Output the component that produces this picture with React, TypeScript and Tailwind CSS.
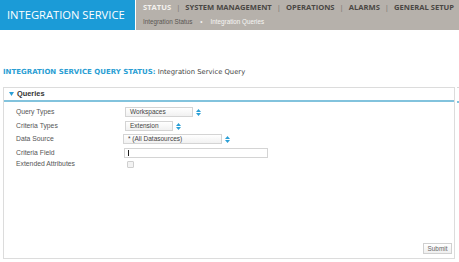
import React from "react";

const navFont = { fontFamily: '"Open Sans", "DejaVu Sans", sans-serif' };
const bodyFont = { fontFamily: '"Liberation Sans", Arial, sans-serif' };

function SpinArrows() {
  return (
    <svg width="5" height="7" viewBox="0 0 5 7" className="ml-[3px] shrink-0">
      <path d="M2.5 0 L5 3 L0 3 Z" fill="#2a9fd6" />
      <path d="M0 4 L5 4 L2.5 7 Z" fill="#2a9fd6" />
    </svg>
  );
}

function SelectBox({ width, value }: { width: string; value: string }) {
  return (
    <div className="flex items-center">
      <div
        className={`${width} h-[10px] border border-[#d4d4d4] bg-gradient-to-b from-white to-[#f1f1f1] text-[6.5px] leading-[8px] text-[#444] pl-[4px] whitespace-nowrap`}
      >
        {value}
      </div>
      <SpinArrows />
    </div>
  );
}

function FormRow({
  label,
  top,
  children,
}: {
  label: string;
  top: string;
  children: React.ReactNode;
}) {
  return (
    <div className={`flex items-center ${top}`}>
      <div className="w-[120px] shrink-0 pl-[12px] text-[6.8px] leading-[8px] text-[#555] whitespace-nowrap">{label}</div>
      {children}
    </div>
  );
}

function Sep() {
  return <span className="mx-[5px] font-normal text-[#77726d]">|</span>;
}

export default function App() {
  return (
    <div className="w-[459px] h-[262px] overflow-hidden bg-white" style={bodyFont}>
      {/* Top bar */}
      <div className="flex h-[30px]">
        <div
          className="w-[135px] shrink-0 bg-[#1b9bd7] flex items-center pl-[7px] pt-[1px] text-white text-[11.2px] whitespace-nowrap"
          style={navFont}
        >
          INTEGRATION SERVICE
        </div>
        <div className="ml-[1px] flex-1 bg-[#b6b1ab] pl-[7px] pt-[2px] whitespace-nowrap overflow-hidden" style={navFont}>
          <div className="flex items-center text-[7.6px] font-bold leading-[11px] text-[#4a4744]">
            <span className="text-[#f4f2ef]">STATUS</span>
            <Sep />
            <span>SYSTEM MANAGEMENT</span>
            <Sep />
            <span>OPERATIONS</span>
            <Sep />
            <span>ALARMS</span>
            <Sep />
            <span>GENERAL SETUP</span>
          </div>
          <div className="flex items-center text-[6.3px] leading-[10px] mt-[4px]" style={bodyFont}>
            <span className="text-[#5a5753]">Integration Status</span>
            <span className="mx-[8px] text-[#f4f2ef]">•</span>
            <span className="text-[#f7f6f4]">Integration Queries</span>
          </div>
        </div>
      </div>

      {/* Page title */}
      <div
        className="mt-[38px] pl-[3px] text-[7px] leading-[9px] flex whitespace-nowrap"
        style={{ fontFamily: '"DejaVu Sans", Verdana, sans-serif' }}
      >
        <span className="font-bold text-[#2b9ed3]">INTEGRATION SERVICE QUERY STATUS:</span>
        <span className="ml-[2px] text-[#444] text-[6.8px]">Integration Service Query</span>
      </div>

      {/* Panel */}
      <div className="mt-[10px] flex">
        <div className="ml-[3px] w-[452px] h-[172px] border border-[#dcdcdc] flex flex-col">
          <div className="h-[14px] border-b-2 border-[#82c3dd] flex items-center pl-[5px]">
            <svg width="5" height="4" viewBox="0 0 5 4" className="mr-[3px]">
              <path d="M0 0 L5 0 L2.5 4 Z" fill="#2a9fd6" />
            </svg>
            <span className="text-[7.4px] font-bold text-[#333]">Queries</span>
          </div>

          <FormRow label="Query Types" top="mt-[5px]">
            <div className="ml-[1px]">
              <SelectBox width="w-[68px]" value="Workspaces" />
            </div>
          </FormRow>
          <FormRow label="Criteria Types" top="mt-[4px]">
            <div className="ml-[1px]">
              <SelectBox width="w-[48px]" value="Extension" />
            </div>
          </FormRow>
          <FormRow label="Data Source" top="mt-[3px]">
            <div className="-ml-[1px]">
              <SelectBox width="w-[99px]" value="* (All Datasources)" />
            </div>
          </FormRow>
          <FormRow label="Criteria Field" top="mt-[4px]">
            <div className="w-[144px] h-[10px] border border-[#d4d4d4] bg-white flex items-center pl-[3px]">
              <div className="w-px h-[6px] bg-[#222]" />
            </div>
          </FormRow>
          <FormRow label="Extended Attributes" top="mt-[2px]">
            <div className="ml-[3px] w-[7px] h-[7px] border border-[#cfcfcf] rounded-[1px] bg-[#f3f3f3]" />
          </FormRow>

          <div className="mt-auto mb-[4px] mr-[2px] flex justify-end">
            <div className="w-[29px] h-[11px] border border-[#d0d0d0] bg-gradient-to-b from-white to-[#efefef] text-[6.4px] leading-[9px] text-[#666] text-center">
              Submit
            </div>
          </div>
        </div>
        <div className="ml-[2px] w-[2px] flex flex-col">
          <div className="h-px bg-[#d8d8d8]" />
          <div className="mt-[13px] h-[2px] bg-[#82c3dd]" />
        </div>
      </div>
    </div>
  );
}
